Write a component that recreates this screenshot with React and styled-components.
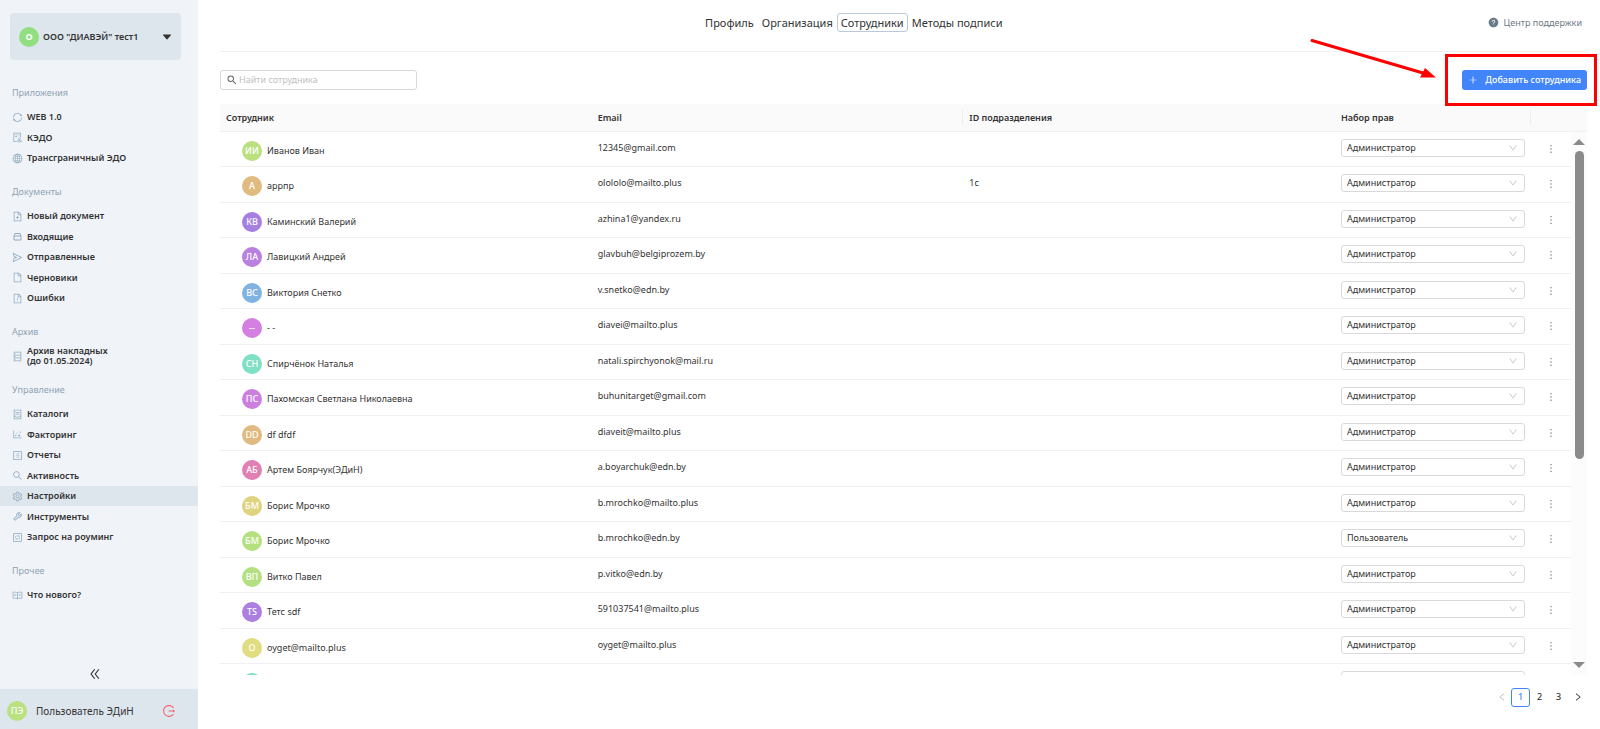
import React from "react";
import styled, { createGlobalStyle } from "styled-components";
import {
    AiFillCaretDown,
    AiFillQuestionCircle,
    AiOutlineAudit,
    AiOutlineContainer,
    AiOutlineDatabase,
    AiOutlineDotChart,
    AiOutlineDoubleLeft,
    AiOutlineDown,
    AiOutlineFile,
    AiOutlineFileAdd,
    AiOutlineFileExclamation,
    AiOutlineGlobal,
    AiOutlineInteraction,
    AiOutlineLeft,
    AiOutlineLogout,
    AiOutlineMore,
    AiOutlinePlus,
    AiOutlineProfile,
    AiOutlineRead,
    AiOutlineRight,
    AiOutlineSearch,
    AiOutlineSend,
    AiOutlineSetting,
    AiOutlineSync,
    AiOutlineTool,
} from "react-icons/ai";
import { MdSearch } from "react-icons/md";

const sections = [
    {
        title: "Приложения",
        items: [
            { icon: AiOutlineSync, text: "WEB 1.0" },
            { icon: AiOutlineAudit, text: "КЭДО" },
            { icon: AiOutlineGlobal, text: "Трансграничный ЭДО" },
        ],
    },
    {
        title: "Документы",
        items: [
            { icon: AiOutlineFileAdd, text: "Новый документ" },
            { icon: TrayIcon, text: "Входящие" },
            { icon: AiOutlineSend, text: "Отправленные" },
            { icon: AiOutlineFile, text: "Черновики" },
            { icon: AiOutlineFileExclamation, text: "Ошибки" },
        ],
    },
    {
        title: "Архив",
        items: [{ icon: AiOutlineDatabase, text: "Архив накладных", note: "(до 01.05.2024)" }],
    },
    {
        title: "Управление",
        items: [
            { icon: AiOutlineContainer, text: "Каталоги" },
            { icon: AiOutlineDotChart, text: "Факторинг" },
            { icon: AiOutlineProfile, text: "Отчеты" },
            { icon: AiOutlineSearch, text: "Активность" },
            { icon: AiOutlineSetting, text: "Настройки", active: true },
            { icon: AiOutlineTool, text: "Инструменты" },
            { icon: AiOutlineInteraction, text: "Запрос на роуминг" },
        ],
    },
    {
        title: "Прочее",
        items: [{ icon: AiOutlineRead, text: "Что нового?" }],
    },
];

const tabs = ["Профиль", "Организация", "Сотрудники", "Методы подписи"];

const employees = [
    { initials: "ИИ", color: "#bae080", name: "Иванов Иван", email: "12345@gmail.com" },
    { initials: "А", color: "#e0bb80", name: "аррпр", email: "olololo@mailto.plus", unit: "1с" },
    { initials: "КВ", color: "#a580e0", name: "Каминский Валерий", email: "azhina1@yandex.ru" },
    { initials: "ЛА", color: "#b980e0", name: "Лавицкий Андрей", email: "glavbuh@belgiprozem.by" },
    { initials: "ВС", color: "#80b3e0", name: "Виктория Снетко", email: "v.snetko@edn.by" },
    { initials: "--", color: "#d480e0", name: "- -", email: "diavei@mailto.plus" },
    { initials: "СН", color: "#80e0c4", name: "Спирчёнок Наталья", email: "natali.spirchyonok@mail.ru" },
    { initials: "ПС", color: "#cb80e0", name: "Пахомская Светлана Николаевна", email: "buhunitarget@gmail.com" },
    { initials: "DD", color: "#e0ba80", name: "df dfdf", email: "diaveit@mailto.plus" },
    { initials: "АБ", color: "#e080b3", name: "Артем Боярчук(ЭДиН)", email: "a.boyarchuk@edn.by" },
    { initials: "БМ", color: "#e0d380", name: "Борис Мрочко", email: "b.mrochko@mailto.plus" },
    { initials: "БМ", color: "#b5e080", name: "Борис Мрочко", email: "b.mrochko@edn.by", role: "Пользователь" },
    { initials: "ВП", color: "#b3e080", name: "Витко Павел", email: "p.vitko@edn.by" },
    { initials: "TS", color: "#ab80e0", name: "Тетс sdf", email: "591037541@mailto.plus" },
    { initials: "O", color: "#e0dc80", name: "oyget@mailto.plus", email: "oyget@mailto.plus" },
    { initials: "", color: "#80e0b8", name: "", email: "" },
];

function TrayIcon(props)
{
    return (
        <svg viewBox="0 0 11 11" width={props.size} height={props.size} fill="none" stroke="currentColor">
            <path d="M2 5 L3 2.500 H8 L9 5 V9 H2 Z M2 5 H9" strokeLinejoin="round"/>
        </svg>
    );
}

function Sidebar()
{
    return (
        <SidebarLayout>
            <OrgButton type="button">
                <Avatar $color="#92df82" $bold>O</Avatar>
                <OrgName>ООО "ДИАВЭЙ" тест1</OrgName>
                <AiFillCaretDown size={12}/>
            </OrgButton>
            <Menu>
                {sections.map((section) => (
                    <section key={section.title}>
                        <MenuTitle>{section.title}</MenuTitle>
                        <MenuList>
                            {section.items.map((item) => (
                                <MenuRow key={item.text}>
                                    <MenuLink href="#" $active={item.active}>
                                        <item.icon size={11}/>
                                        <span>{item.text}{item.note && <><br/>{item.note}</>}</span>
                                    </MenuLink>
                                </MenuRow>
                            ))}
                        </MenuList>
                    </section>
                ))}
            </Menu>
            <CollapseButton type="button" aria-label="Свернуть меню"><AiOutlineDoubleLeft size={14}/></CollapseButton>
            <UserBar>
                <Avatar $color="#bae080">ПЭ</Avatar>
                <UserName>Пользователь ЭДиН</UserName>
                <LogoutButton type="button" aria-label="Выйти"><AiOutlineLogout size={14}/></LogoutButton>
            </UserBar>
        </SidebarLayout>
    );
}

function Columns()
{
    return (
        <colgroup>
            <col/>
            <col/>
            <col/>
            <RoleCol/>
            <ActionCol/>
        </colgroup>
    );
}

function EmployeeRow(props)
{
    return (
        <Row>
            <NameCell>
                <Person>
                    <Avatar $color={props.color}>{props.initials}</Avatar>
                    <span>{props.name}</span>
                </Person>
            </NameCell>
            <Cell>{props.email}</Cell>
            <Cell>{props.unit}</Cell>
            <RoleCell>
                <SelectBox>
                    <Select aria-label="Набор прав" defaultValue={props.role || "Администратор"}>
                        <option>Администратор</option>
                        <option>Пользователь</option>
                    </Select>
                    <AiOutlineDown size={10}/>
                </SelectBox>
            </RoleCell>
            <ActionCell>
                <MoreButton type="button" aria-label="Действия"><AiOutlineMore size={12}/></MoreButton>
            </ActionCell>
        </Row>
    );
}

// Arrow and frame that point at the add button
function Callout()
{
    return (
        <CalloutDrawing viewBox="0 0 292 72" aria-hidden="true">
            <path d="M5 4.500 L116 37" stroke="#fe0000" strokeWidth="3" strokeLinecap="round"/>
            <path d="M118 32 L129 41.500 L113 41.500 Z" fill="#fe0000"/>
            <rect x="139.500" y="19.500" width="149" height="49" fill="none" stroke="#fe0000" strokeWidth="3"/>
        </CalloutDrawing>
    );
}

function App()
{
    return (
        <>
            <GlobalStyle/>
            <Page>
                <Sidebar/>
                <Main>
                    <Header>
                        <Tabs>
                            {tabs.map((tab) => <Tab key={tab} href="#" $active={tab === "Сотрудники"}>{tab}</Tab>)}
                        </Tabs>
                        <Support href="#"><AiFillQuestionCircle size={11}/>Центр поддержки</Support>
                    </Header>
                    <Toolbar>
                        <SearchBox>
                            <MdSearch size={12}/>
                            <SearchInput type="text" placeholder="Найти сотрудника" aria-label="Найти сотрудника"/>
                        </SearchBox>
                        <AddButton type="button"><AiOutlinePlus size={10}/>Добавить сотрудника</AddButton>
                        <Callout/>
                    </Toolbar>
                    <HeadBar>
                        <Table>
                            <Columns/>
                            <thead>
                                <tr>
                                    <HeadCell>Сотрудник</HeadCell>
                                    <HeadCell $divider>Email</HeadCell>
                                    <HeadCell>ID подразделения</HeadCell>
                                    <HeadCell $divider>Набор прав</HeadCell>
                                    <HeadCell aria-label="Действия"/>
                                </tr>
                            </thead>
                        </Table>
                    </HeadBar>
                    <Body>
                        <Rows>
                            <Table>
                                <Columns/>
                                <tbody>
                                    {employees.map((employee, index) => <EmployeeRow key={index} {...employee}/>)}
                                </tbody>
                            </Table>
                        </Rows>
                        <ScrollTrack>
                            <ScrollArrow viewBox="0 0 12 6"><path d="M6 0 L12 6 H0 Z"/></ScrollArrow>
                            <ScrollSpace>
                                <ScrollThumb/>
                            </ScrollSpace>
                            <ScrollArrow viewBox="0 0 12 6"><path d="M6 6 L12 0 H0 Z"/></ScrollArrow>
                        </ScrollTrack>
                    </Body>
                    <Pagination aria-label="Страницы">
                        <PageButton type="button" aria-label="Назад" $muted><AiOutlineLeft size={10}/></PageButton>
                        <PageButton type="button" $active>1</PageButton>
                        <PageButton type="button">2</PageButton>
                        <PageButton type="button">3</PageButton>
                        <PageButton type="button" aria-label="Вперёд"><AiOutlineRight size={10}/></PageButton>
                    </Pagination>
                </Main>
            </Page>
        </>
    );
}

export default App;

const GlobalStyle = createGlobalStyle`
    * {
        box-sizing: border-box;
    }
    body {
        margin: 0;
        background: white;
        color: #333333;
        font-family: "Noto Sans", "Open Sans", sans-serif;
        font-size: 9px;
        line-height: 14px;
    }
    button, input, select {
        margin: 0;
        padding: 0;
        border: none;
        background: none;
        color: inherit;
        font: inherit;
    }
    button {
        cursor: pointer;
    }
    a {
        color: inherit;
        text-decoration: none;
    }
    svg {
        flex: none;
    }
`
const Page = styled.div`
    display: flex;
    height: 100vh;
`
const SidebarLayout = styled.aside`
    display: flex;
    flex: none;
    flex-flow: column nowrap;
    width: 198px;
    background: #f0f4f9;
`
const OrgButton = styled.button`
    display: flex;
    flex: none;
    align-items: center;
    gap: 4px;
    height: 47px;
    margin: 13px 17px 0 10px;
    padding: 0 8px 0 9px;
    border-radius: 4px;
    background: #dde6ed;
    text-align: left;
`
const OrgName = styled.span`
    flex: 1 0 0;
    font-weight: 600;
    white-space: nowrap;
`
const Avatar = styled.span`
    display: flex;
    flex: none;
    align-items: center;
    justify-content: center;
    width: 20px;
    height: 20px;
    border-radius: 50%;
    background: ${(props) => props.$color};
    color: white;
    font-weight: ${(props) => props.$bold ? 700 : 500};
`
const Menu = styled.nav`
    display: flex;
    flex: 1 0 0;
    flex-flow: column nowrap;
    gap: 10px;
    padding-top: 19px;
`
const MenuTitle = styled.h2`
    margin: 0;
    padding: 0 12px;
    color: #8fa3b3;
    font-size: 9px;
    font-weight: 400;
    line-height: 28px;
`
const MenuList = styled.ul`
    margin: 0;
    padding: 0;
    list-style: none;
`
const MenuRow = styled.li`
    display: flex;
    height: 20px;

    &:nth-child(even) {
        height: 21px;
    }
`
const MenuLink = styled.a`
    display: flex;
    flex: 1 0 0;
    align-items: center;
    gap: 4px;
    padding: 0 12px;
    background: ${(props) => props.$active ? "#dde6ed" : "transparent"};
    font-weight: 600;
    line-height: 10px;

    svg {
        color: #8fabc0;
    }
`
const CollapseButton = styled.button`
    display: flex;
    align-items: center;
    justify-content: center;
    height: 30px;
    padding-right: 8px;
`
const UserBar = styled.div`
    display: flex;
    align-items: center;
    gap: 9px;
    height: 40px;
    padding: 4px 22px 0 7px;
    background: #dde6ed;
`
const UserName = styled.span`
    flex: 1 0 0;
    font-size: 10px;
`
const LogoutButton = styled.button`
    display: flex;
    color: #f5616a;
`
const Main = styled.main`
    display: flex;
    flex: 1 0 0;
    flex-flow: column nowrap;
    min-width: 0;
    padding: 0 13px 0 22px;
`
const Header = styled.header`
    display: flex;
    flex: none;
    align-items: center;
    height: 52px;
    padding-bottom: 6px;
    border-bottom: 1px solid #f0f0f0;
`
const Tabs = styled.nav`
    display: flex;
    flex: 1 0 0;
    justify-content: center;
`
const Tab = styled.a`
    padding: 0 3px;
    border: 1px solid ${(props) => props.$active ? "#b8cadb" : "transparent"};
    border-radius: 3px;
    font-size: 11px;
    line-height: 17px;
`
const Support = styled.a`
    display: flex;
    align-items: center;
    gap: 5px;
    padding-right: 5px;
    color: #6b7a88;
`
const Toolbar = styled.div`
    position: relative;
    display: flex;
    flex: none;
    align-items: center;
    justify-content: space-between;
    height: 52px;
    padding-top: 4px;
`
const SearchBox = styled.div`
    display: flex;
    align-items: center;
    gap: 1px;
    width: 197px;
    height: 20px;
    padding: 0 5px;
    border: 1px solid #d9d9d9;
    border-radius: 3px;
    color: #666666;
`
const SearchInput = styled.input`
    flex: 1 0 0;
    min-width: 0;
    outline: none;

    &::placeholder {
        color: #bfbfbf;
    }
`
const AddButton = styled.button`
    display: flex;
    align-items: center;
    gap: 7px;
    height: 20px;
    padding: 0 6px;
    border-radius: 3px;
    background: #4285fa;
    color: white;
    font-weight: 500;
`
const CalloutDrawing = styled.svg`
    position: absolute;
    top: -16px;
    right: -12px;
    width: 292px;
    height: 72px;
    fill: none;
    pointer-events: none;
`
const HeadBar = styled.div`
    flex: none;
    padding-right: 16px;
    border-bottom: 1px solid #f0f0f0;
    background: #fafafa;
`
const Table = styled.table`
    width: 100%;
    border-spacing: 0;
    table-layout: fixed;
`
const RoleCol = styled.col`
    width: 196px;
`
const ActionCol = styled.col`
    width: 40px;
`
const HeadCell = styled.th`
    height: 27px;
    padding: 0 6px;
    background: linear-gradient(#eeeeee, #eeeeee) no-repeat right center;
    background-size: ${(props) => props.$divider ? "1px 15px" : "0 0"};
    font-weight: 600;
    text-align: left;
`
const Body = styled.div`
    display: flex;
    flex: 1 0 0;
    min-height: 0;
    overflow: hidden;
`
const Rows = styled.div`
    flex: 1 0 0;
    min-width: 0;
`
const Row = styled.tr`
    height: 35px;

    &:nth-child(even) {
        height: 36px;
    }
`
const Cell = styled.td`
    padding: 9px 6px 0;
    border-bottom: 1px solid #f0f0f0;
    vertical-align: top;
`
const NameCell = styled(Cell)`
    padding-left: 22px;
`
const RoleCell = styled(Cell)`
    padding-top: 7px;
`
const ActionCell = styled(Cell)`
    padding-top: 11px;
`
const Person = styled.div`
    display: flex;
    align-items: center;
    gap: 5px;
`
const SelectBox = styled.div`
    position: relative;

    svg {
        position: absolute;
        top: 4px;
        right: 7px;
        color: #bfbfbf;
        pointer-events: none;
    }
`
const Select = styled.select`
    display: block;
    width: 100%;
    height: 18px;
    padding: 0 5px;
    border: 1px solid #d9d9d9;
    border-radius: 3px;
    background: white;
    appearance: none;
`
const MoreButton = styled.button`
    display: flex;
    margin: 0 auto;
    color: #666666;
`
const ScrollTrack = styled.div`
    display: flex;
    flex: none;
    flex-flow: column nowrap;
    align-items: center;
    width: 16px;
    padding: 7px 0;
    background: #fcfcfc;
`
const ScrollArrow = styled.svg`
    width: 12px;
    height: 6px;
    fill: #8b8b8b;
`
const ScrollSpace = styled.div`
    flex: 1 0 0;
    padding: 6px 0;
`
const ScrollThumb = styled.div`
    width: 9px;
    height: 61%;
    border-radius: 5px;
    background: #8b8b8b;
`
const Pagination = styled.nav`
    display: flex;
    flex: none;
    align-items: center;
    justify-content: flex-end;
    height: 54px;
    padding-bottom: 10px;
`
const PageButton = styled.button`
    display: flex;
    align-items: center;
    justify-content: center;
    width: 19px;
    height: 19px;
    border: 1px solid ${(props) => props.$active ? "#4285fa" : "transparent"};
    border-radius: 3px;
    color: ${(props) => props.$active ? "#4285fa" : props.$muted ? "#bfbfbf" : "#333333"};
    font-weight: 500;
`
